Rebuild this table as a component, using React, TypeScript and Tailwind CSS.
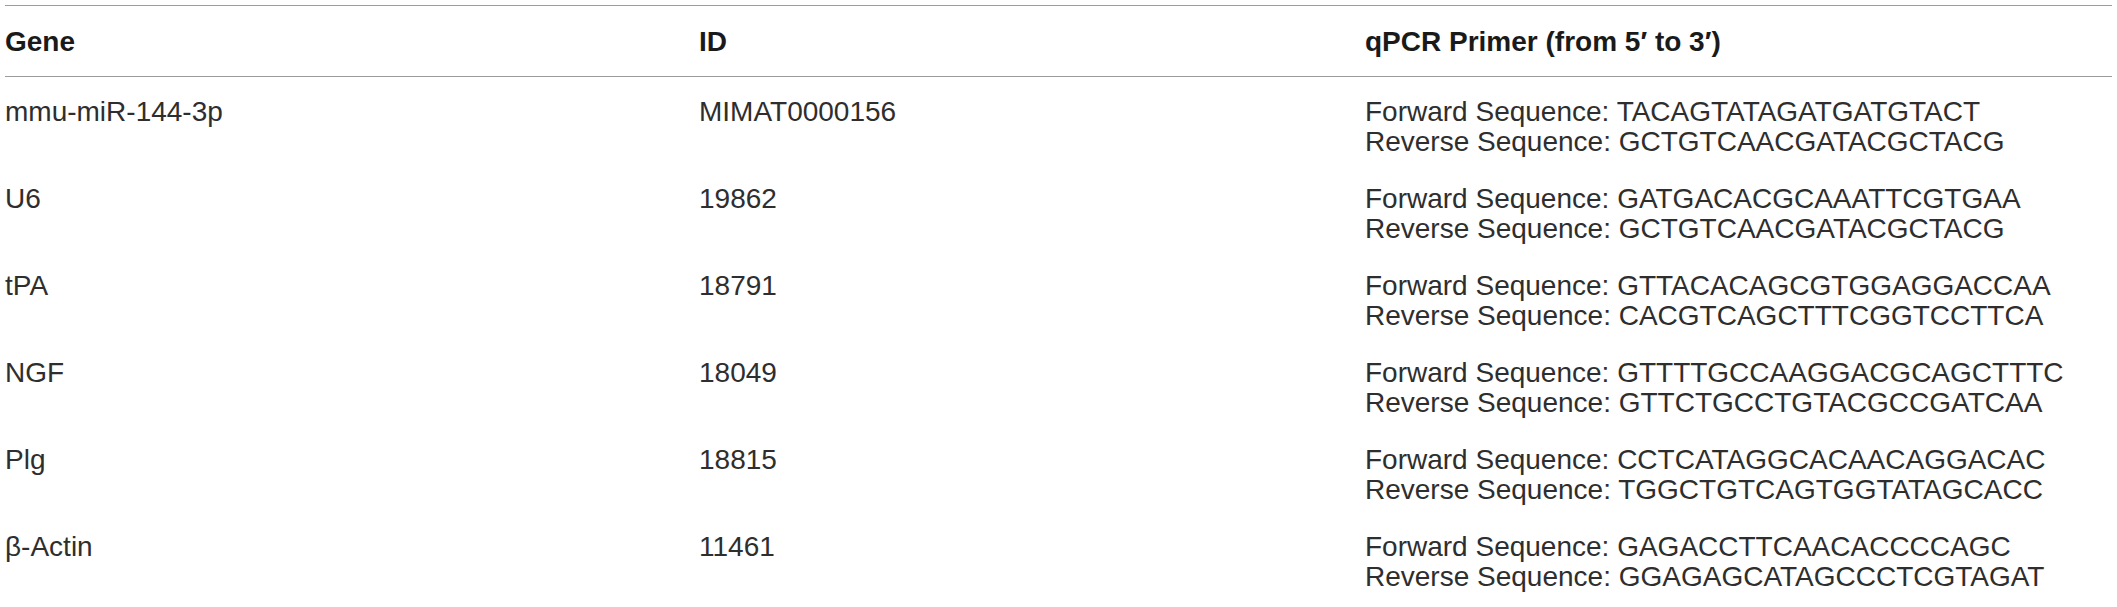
const rows = [
  {
    gene: "mmu-miR-144-3p",
    id: "MIMAT0000156",
    fwd: "TACAGTATAGATGATGTACT",
    rev: "GCTGTCAACGATACGCTACG",
  },
  { gene: "U6", id: "19862", fwd: "GATGACACGCAAATTCGTGAA", rev: "GCTGTCAACGATACGCTACG" },
  { gene: "tPA", id: "18791", fwd: "GTTACACAGCGTGGAGGACCAA", rev: "CACGTCAGCTTTCGGTCCTTCA" },
  { gene: "NGF", id: "18049", fwd: "GTTTTGCCAAGGACGCAGCTTTC", rev: "GTTCTGCCTGTACGCCGATCAA" },
  { gene: "Plg", id: "18815", fwd: "CCTCATAGGCACAACAGGACAC", rev: "TGGCTGTCAGTGGTATAGCACC" },
  { gene: "β-Actin", id: "11461", fwd: "GAGACCTTCAACACCCCAGC", rev: "GGAGAGCATAGCCCTCGTAGAT" },
];

export default function App() {
  return (
    <div className="h-[607px] w-[2117px] overflow-hidden bg-white pl-[5px] pt-[5px]">
      <table className="w-[2107px] table-fixed border-collapse border-t border-[#9c9c9c] font-['Liberation_Sans',Arial,sans-serif] text-[28px] leading-[30px] text-[#2e2e2e]">
        <colgroup>
          <col className="w-[694px]" />
          <col className="w-[666px]" />
          <col />
        </colgroup>
        <thead>
          <tr className="border-b border-[#9c9c9c] text-left text-[#1a1a1a]">
            <th className="pt-[21px] pb-[19px] font-bold">Gene</th>
            <th className="pt-[21px] pb-[19px] font-bold">ID</th>
            <th className="pt-[21px] pb-[19px] font-bold">qPCR Primer (from 5′ to 3′)</th>
          </tr>
        </thead>
        <tbody>
          {rows.map((row) => (
            <tr key={row.gene} className="align-top">
              <td className="pt-[20px] pb-[7px]">{row.gene}</td>
              <td className="pt-[20px] pb-[7px]">{row.id}</td>
              <td className="pt-[20px] pb-[7px]">
                <div>Forward Sequence: {row.fwd}</div>
                <div>Reverse Sequence: {row.rev}</div>
              </td>
            </tr>
          ))}
        </tbody>
      </table>
    </div>
  );
}
